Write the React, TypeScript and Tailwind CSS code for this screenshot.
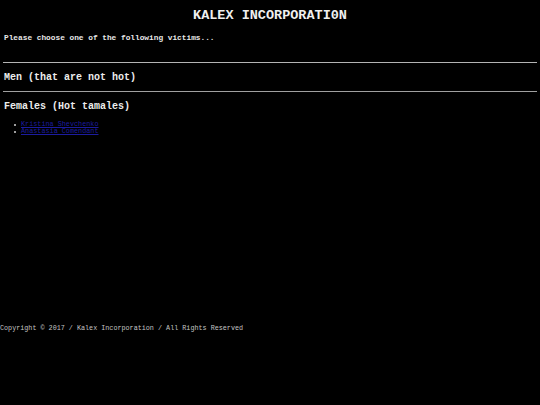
export default function App() {
  return (
    <div
      className="h-[405px] w-full overflow-hidden bg-black text-white"
      style={{ fontFamily: '"Liberation Mono", "Courier New", monospace' }}
    >
      <h1 className="pt-[8px] text-center text-[13.5px] font-bold leading-[16px] text-[#f0f0f0]">
        KALEX INCORPORATI0N
      </h1>
      <p className="mt-[9px] ml-[4px] text-[7.8px] font-bold leading-[10px] text-[#e8e8e8]">
        Please choose one of the following victims...
      </p>
      <div className="mx-[3px] mt-[19px] h-px bg-[#b4b4b4]" />
      <h2 className="mt-[9px] ml-[4px] text-[10px] font-bold leading-[12px] text-[#ececec]">
        Men (that are not hot)
      </h2>
      <div className="mx-[3px] mt-[7px] h-px bg-[#a0a0a0]" />
      <h2 className="mt-[9px] ml-[4px] text-[10px] font-bold leading-[12px] text-[#ececec]">
        Females (Hot tamales)
      </h2>
      <ul className="mt-[8px] flex flex-col text-[6.8px] leading-[7px]">
        <li className="flex items-center">
          <span className="ml-[14px] mr-[5px] h-[2px] w-[2px] rounded-full bg-[#d0d0d0]" />
          <a href="#" className="text-[#1c1ca0] underline">Kristina Shevchenko</a>
        </li>
        <li className="flex items-center">
          <span className="ml-[14px] mr-[5px] h-[2px] w-[2px] rounded-full bg-[#d0d0d0]" />
          <a href="#" className="text-[#1c1ca0] underline">Anastasia Comendant</a>
        </li>
      </ul>
      <p className="mt-[188px] text-[6.75px] leading-[10px] text-[#c4c4c4]">
        Copyright © 2017 / Kalex Incorporation / All Rights Reserved
      </p>
    </div>
  );
}
